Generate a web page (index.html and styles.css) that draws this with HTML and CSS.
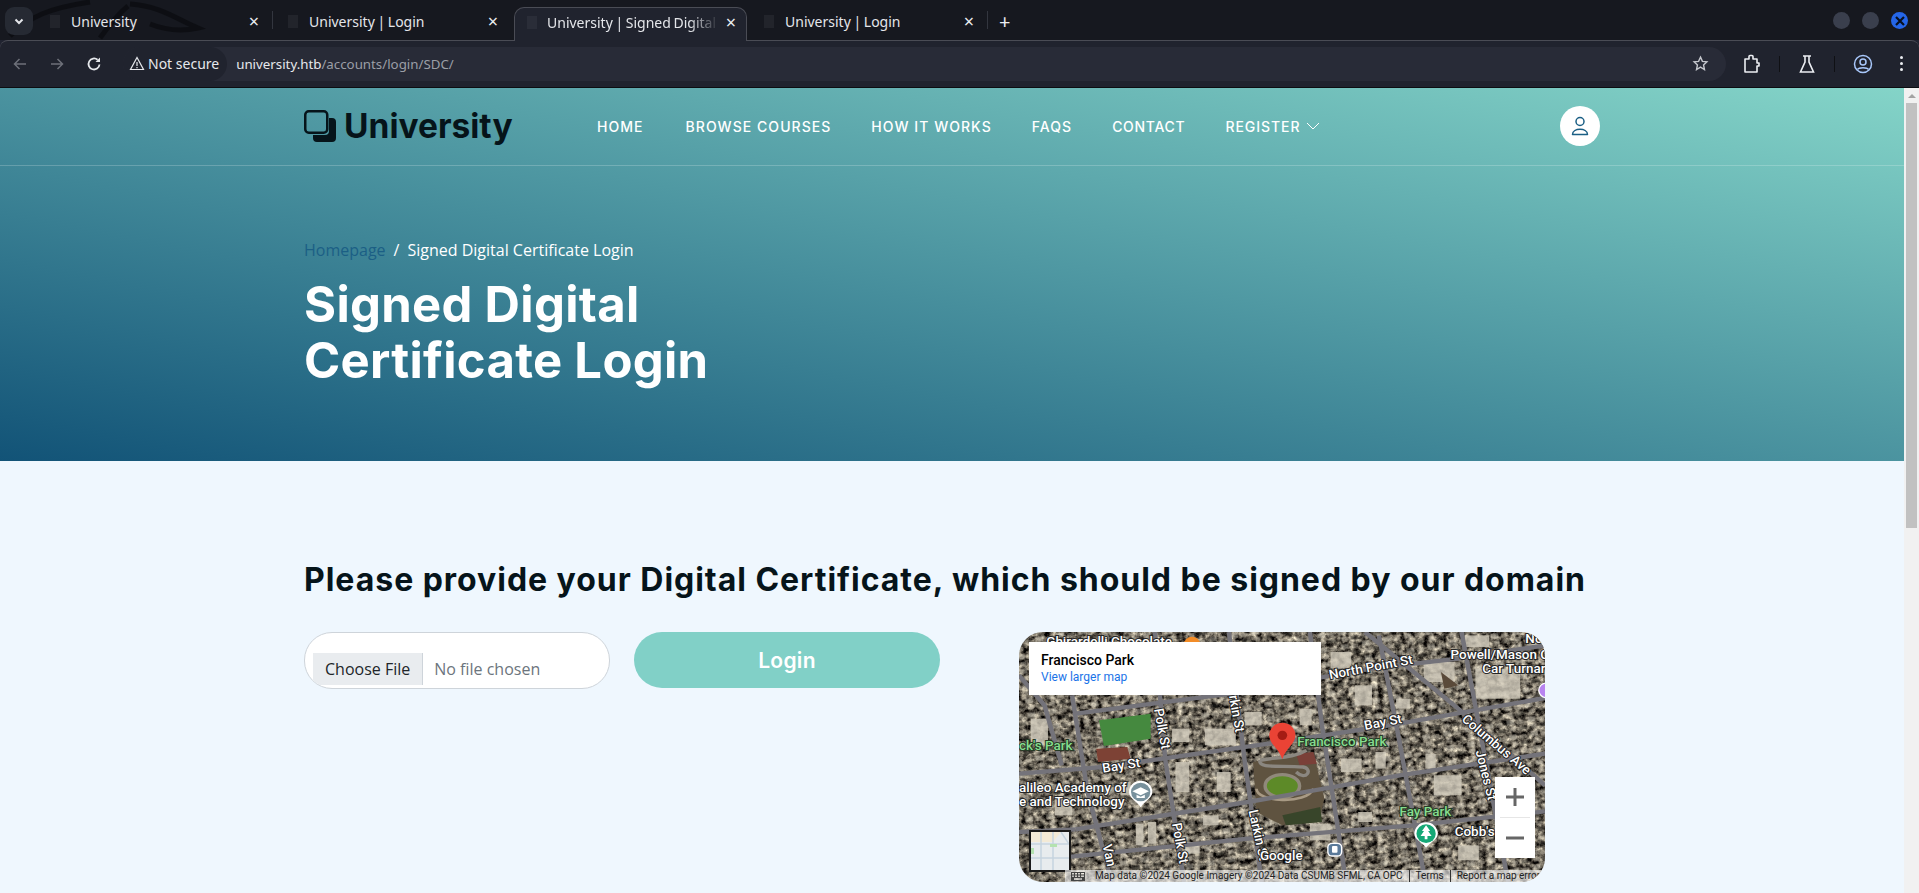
FILE: index.html
```html
<!DOCTYPE html>
<html>
<head>
  <title>University | Signed Digital Certificate Login</title>
  <link rel="stylesheet" href="styles.css">
</head>
<body>
  <!-- browser window -->
  <div class="tabstrip">
    <svg class="wallpaper" viewBox="0 0 260 40" fill="none" stroke="#0b0c10" stroke-opacity=".8" stroke-width="5">
      <path d="M10 36 C30 16 50 8 90 2"/>
      <path d="M130 4 C160 6 175 18 198 28 C180 32 165 30 150 24"/>
      <path d="M100 38 C110 24 118 14 128 6"/>
    </svg>
    <button class="tabsearch">
      <svg width="12" height="12" viewBox="0 0 12 12" fill="none" stroke="#e4e6ea" stroke-width="2"><path d="M2.500 4.500 6 8l3.500-3.500"/></svg>
    </button>
    <div class="tab tab-one">
      <span class="favicon"></span><span class="tab-title">University</span><span class="tab-close">×</span>
    </div>
    <span class="tab-sep"></span>
    <div class="tab tab-two">
      <span class="favicon"></span><span class="tab-title">University | Login</span><span class="tab-close">×</span>
    </div>
    <div class="tab tab-active">
      <span class="favicon"></span><span class="tab-title tab-title-fade">University | Signed Digital</span><span class="tab-close">×</span>
    </div>
    <div class="tab tab-four">
      <span class="favicon"></span><span class="tab-title">University | Login</span><span class="tab-close">×</span>
    </div>
    <span class="tab-sep"></span>
    <span class="newtab">+</span>
    <div class="winbtns">
      <span class="winbtn"></span>
      <span class="winbtn"></span>
      <span class="winbtn winbtn-close">
        <svg width="10" height="10" viewBox="0 0 10 10" stroke="#07101f" stroke-width="2.200"><path d="M1 1l8 8M9 1l-8 8"/></svg>
      </span>
    </div>
  </div>

  <div class="toolbar">
    <svg class="tool tool-back" width="16" height="16" viewBox="0 0 16 16" fill="none" stroke="#6d7079" stroke-width="1.500"><path d="M14 8H2.500M7.500 3l-5 5 5 5"/></svg>
    <svg class="tool tool-forward" width="16" height="16" viewBox="0 0 16 16" fill="none" stroke="#6d7079" stroke-width="1.500"><path d="M2 8h11.500M8.500 3l5 5-5 5"/></svg>
    <svg class="tool tool-reload" width="16" height="16" viewBox="0 0 16 16" fill="none" stroke="#e6e8ec" stroke-width="1.800"><path d="M13.500 8.500A5.500 5.500 0 1 1 11.600 3.800"/><path d="M14 1.500v4.500H9.500z" fill="#e6e8ec" stroke="none"/></svg>
    <div class="omnibox">
      <span class="secure">
        <svg width="16" height="15" viewBox="0 0 16 15" fill="none" stroke="#e6e8ec" stroke-width="1.200"><path d="M8 1.500 1.500 13.500h13z"/><path d="M8 6v4M8 11v1.200"/></svg>
        Not secure
      </span>
      <span class="url">university.htb<span class="url-path">/accounts/login/SDC/</span></span>
      <svg class="star" width="17" height="17" viewBox="0 0 24 24" fill="none" stroke="#c4c6cc" stroke-width="2"><path d="M12 3l2.700 6 6.300.700-4.700 4.300 1.300 6.500L12 17.200 6.400 20.500l1.300-6.500L3 9.700 9.300 9z"/></svg>
    </div>
    <div class="toolicons">
      <svg width="18" height="20" viewBox="0 0 18 20" fill="none" stroke="#eceef2" stroke-width="1.600"><path d="M2 5h4V2.500a1 1 0 0 1 1-1h2a1 1 0 0 1 1 1V5h4v4h2v3h-2v6H2z" stroke-linejoin="round"/></svg>
      <span class="tool-sep"></span>
      <svg width="18" height="20" viewBox="0 0 18 20" fill="none" stroke="#eceef2" stroke-width="1.600"><path d="M5 2h8M7 2v6L2.500 18h13L11 8V2"/></svg>
      <span class="tool-sep"></span>
      <svg width="20" height="20" viewBox="0 0 20 20" fill="none" stroke="#a8c7fa" stroke-width="1.500"><circle cx="10" cy="10" r="8.500"/><circle cx="10" cy="8" r="3"/><path d="M4.500 15.500c1.500-2.500 9.500-2.500 11 0"/></svg>
      <span class="dots"><i></i><i></i><i></i></span>
    </div>
  </div>

  <!-- page -->
  <div class="viewport">
    <div class="page">
      <div class="hero">
        <header class="site-header">
          <div class="container header-row">
            <a class="logo">
              <svg width="33" height="33" viewBox="0 0 33 33"><path d="M25 8h3a4 4 0 0 1 4 4v16a4 4 0 0 1-4 4H13a4 4 0 0 1-4-4v-3h12a4 4 0 0 0 4-4z" fill="#06141a"/><rect x="1.250" y="1.250" width="22" height="21.500" rx="3.500" fill="none" stroke="#06141a" stroke-width="2.500"/></svg>
              <span>University</span>
            </a>
            <nav class="nav">
              <a class="nav-home">Home</a>
              <a>Browse Courses</a>
              <a>How It Works</a>
              <a>FAQs</a>
              <a class="nav-contact">Contact</a>
              <a class="nav-drop">Register
                <svg width="14" height="8" viewBox="0 0 14 8" fill="none" stroke="#fff" stroke-width="1"><path d="M1 1l6 6 6-6"/></svg>
              </a>
            </nav>
            <a class="user-btn">
              <svg width="20" height="20" viewBox="0 0 20 20" fill="none" stroke="#1b5f85" stroke-width="1.500"><circle cx="10" cy="5.500" r="4"/><path d="M2.500 18.500c0-7 15-7 15 0z" stroke-linejoin="round"/></svg>
            </a>
          </div>
        </header>
        <div class="container hero-body">
          <div class="breadcrumb"><a>Homepage</a><span class="crumb-sep">/</span><span>Signed Digital Certificate Login</span></div>
          <h1>Signed Digital<br>Certificate Login</h1>
        </div>
      </div>

      <section class="container login">
        <h2>Please provide your Digital Certificate, which should be signed by our domain</h2>
        <div class="login-row">
          <form class="login-form">
            <input class="file-input" type="file">
            <button class="login-btn" type="button">Login</button>
          </form>
          <div class="map">
            <svg class="map-img" viewBox="26 20 1526 750" preserveAspectRatio="none">
              <defs>
                <filter id="sat" x="0" y="0" width="100%" height="100%" color-interpolation-filters="sRGB">
                  <feTurbulence type="fractalNoise" baseFrequency=".06" numOctaves="4" seed="11"/>
                  <feColorMatrix values="1.500 0 0 0 -.34  1.450 0 0 0 -.34  1.300 0 0 0 -.31  0 0 0 0 1"/>
                  <feGaussianBlur stdDeviation="1.200"/>
                </filter>
                <filter id="soft" x="-5%" y="-5%" width="110%" height="110%">
                  <feGaussianBlur stdDeviation="1.500"/>
                </filter>
                <pattern id="blocks" width="62" height="44" patternUnits="userSpaceOnUse" patternTransform="rotate(-10)">
                  <rect x="4" y="4" width="22" height="15" fill="#d6d0c2"/>
                  <rect x="34" y="8" width="20" height="12" fill="#b7b0a0"/>
                  <rect x="10" y="26" width="16" height="13" fill="#c4bdae"/>
                  <rect x="36" y="27" width="22" height="11" fill="#2c2a26"/>
                </pattern>
              </defs>
              <rect x="26" y="20" width="1526" height="750" filter="url(#sat)"/>
              <rect x="26" y="20" width="1526" height="750" fill="url(#blocks)" opacity=".45" filter="url(#soft)"/>

              <!-- rooftops -->
              <g fill="#d2ccbd" opacity=".8" filter="url(#soft)">
                <rect x="565" y="310" width="90" height="50"/><rect x="480" y="410" width="40" height="90"/>
                <rect x="365" y="595" width="22" height="65"/><rect x="400" y="590" width="24" height="65"/>
                <rect x="1230" y="450" width="80" height="60"/><rect x="1320" y="30" width="70" height="35"/>
                <rect x="1350" y="130" width="130" height="90"/><rect x="930" y="80" width="60" height="50"/>
                <rect x="1000" y="180" width="50" height="60"/><rect x="840" y="250" width="35" height="50"/>
                <rect x="1200" y="110" width="90" height="60"/><rect x="1205" y="385" width="30" height="45"/>
                <rect x="870" y="595" width="60" height="50"/><rect x="510" y="650" width="40" height="35"/>
                <rect x="960" y="400" width="60" height="40"/><rect x="1060" y="380" width="30" height="50"/>
                <rect x="60" y="280" width="50" height="80"/><rect x="600" y="440" width="40" height="60"/>
                <rect x="1300" y="660" width="60" height="45"/><rect x="470" y="310" width="50" height="40"/>
                <rect x="680" y="260" width="50" height="40"/><rect x="130" y="520" width="50" height="50"/>
                <rect x="320" y="470" width="30" height="40"/><rect x="1010" y="560" width="40" height="30"/>
                <rect x="560" y="570" width="45" height="30"/><rect x="1120" y="220" width="40" height="30"/>
              </g>
              <path d="M1250 140l50 40-40 10z" fill="#5a4a3a"/>

              <!-- park -->
              <g filter="url(#soft)">
                <path d="M705 410 L880 380 L912 520 L900 570 L790 600 L715 560z" fill="#5f5340"/>
                <path d="M790 570 L900 545 L905 590 L800 600z" fill="#39452a"/>
                <path d="M250 370 L340 365 L350 400 L255 410z" fill="#7d4335"/>
                <path d="M830 385 L880 380 L890 415 L840 420z" fill="#7a3f38"/>
              </g>
              <path d="M258 285 L408 265 L408 340 L272 362z" fill="#45893f"/>
              <path d="M725 405 C770 395 820 400 860 375 M725 405 C720 430 780 420 850 425 C880 430 860 470 830 440" fill="none" stroke="#8b8780" stroke-width="10"/>
              <ellipse cx="790" cy="482" rx="50" ry="34" fill="#5d8a28" stroke="#90897b" stroke-width="10"/>
              <path d="M715 490 C715 530 860 540 880 490" fill="none" stroke="#a89a84" stroke-width="8"/>

              <!-- streets -->
              <g fill="none" stroke="#74737a" stroke-width="13">
                <path d="M26 445 L270 425 L750 355 L1100 300 L1552 218"/>
                <path d="M190 265 L640 205 L1045 130 L1300 100 L1552 60"/>
                <path d="M190 612 L690 530 L1130 450 L1552 385"/>
                <path d="M120 700 L690 640 L1170 600 L1552 558"/>
                <path d="M26 620 L190 612"/>
                <path d="M420 20 L450 400 L505 770"/>
                <path d="M635 20 L680 400 L730 770"/>
                <path d="M180 210 L225 500 L295 770"/>
                <path d="M870 20 L905 300 L975 770"/>
                <path d="M1070 30 L1130 350 L1205 770"/>
                <path d="M1310 20 L1400 520 L1445 770"/>
                <path d="M1030 20 L1300 250 L1552 480"/>
                <path d="M26 150 L100 240 L150 420"/>
              </g>

              <!-- pois -->
              <circle cx="528" cy="58" r="24" fill="#f28c28"/>
              <circle cx="1556" cy="195" r="22" fill="#b884f0" stroke="#fff" stroke-width="4"/>
              <path d="M345 500a34 34 0 0 1 68 0c0 18-22 26-34 46c-12-20-34-28-34-46z" fill="#fff"/>
              <circle cx="379" cy="500" r="28" fill="#78909c"/>
              <path d="M355 498l24-12 24 12-24 12z M367 508v10h24v-10l-12 6z" fill="#fff"/>
              <path d="M1173 625a34 34 0 0 1 68 0c0 18-22 24-34 42c-12-18-34-24-34-42z" fill="#fff"/>
              <circle cx="1207" cy="625" r="28" fill="#15a876"/>
              <path d="M1207 600l12 17h-6l10 15h-12v10h-8v-10h-12l10-15h-6z" fill="#fff"/>
              <rect x="920" y="652" width="44" height="42" rx="14" fill="#fff"/>
              <rect x="924" y="656" width="36" height="34" rx="11" fill="#5b7a99"/>
              <rect x="934" y="662" width="16" height="20" rx="3" fill="#fff"/>

              <!-- labels -->
              <g class="road-label">
                <text x="105" y="62">Ghirardelli Chocolate</text>
                <text x="928" y="162" transform="rotate(-11 928 162)">North Point St</text>
                <text x="1278" y="100">Powell/Mason C</text>
                <text x="1370" y="142">Car Turnar</text>
                <text x="1495" y="52">No</text>
                <text x="270" y="442" transform="rotate(-9 270 442)">Bay St</text>
                <text x="1030" y="314" transform="rotate(-11 1030 314)">Bay St</text>
                <text x="418" y="252" transform="rotate(80 418 252)">Polk St</text>
                <text x="470" y="595" transform="rotate(80 470 595)">Polk St</text>
                <text x="635" y="212" transform="rotate(80 635 212)">rkin St</text>
                <text x="692" y="556" transform="rotate(78 692 556)">Larkin St</text>
                <text x="1308" y="285" transform="rotate(41 1308 285)">Columbus Ave</text>
                <text x="1350" y="378" transform="rotate(76 1350 378)">Jones St</text>
                <text x="268" y="660" transform="rotate(78 268 660)">Van</text>
                <text x="26" y="500">alileo Academy of</text>
                <text x="26" y="542">e and Technology</text>
                <text x="1290" y="632">Cobb's</text>
                <text x="725" y="705">Google</text>
              </g>
              <g class="park-label">
                <text x="833" y="362">Francisco Park</text>
                <text x="26" y="374">ck's Park</text>
                <text x="1130" y="572">Fay Park</text>
              </g>

              <!-- marker -->
              <path d="M752 330a38 38 0 0 1 76 0c0 26-28 38-38 72c-10-34-38-46-38-72z" fill="#ea4335"/>
              <circle cx="790" cy="330" r="14" fill="#a51c14"/>
            </svg>

            <div class="map-card">
              <div class="map-card-title">Francisco Park</div>
              <a class="map-card-link">View larger map</a>
            </div>

            <div class="map-zoom">
              <span class="zoom-btn"><svg width="18" height="18" viewBox="0 0 18 18" fill="#666"><path d="M7.500 0h3v7.500H18v3h-7.500V18h-3v-7.500H0v-3h7.500z"/></svg></span>
              <span class="zoom-line"></span>
              <span class="zoom-btn"><svg width="18" height="18" viewBox="0 0 18 18" fill="#666"><path d="M0 7.500h18v3H0z"/></svg></span>
            </div>

            <div class="map-thumb">
              <svg viewBox="0 0 38 38" preserveAspectRatio="none">
                <rect width="38" height="38" fill="#e8ecee"/>
                <path d="M0 0h30L22 10H0z" fill="#f3ead6"/>
                <path d="M0 12h38M10 0v38M22 0v38M0 26h38M30 0l8 12" stroke="#c6d4df" stroke-width="1.500" fill="none"/>
                <rect x="19" y="12" width="7" height="3" fill="#b4e2b0"/>
                <rect x="0" y="16" width="3" height="6" fill="#b4e2b0"/>
              </svg>
            </div>

            <div class="map-attrib">
              <svg class="kbd" width="14" height="9" viewBox="0 0 14 9" fill="#444"><path d="M0 0h14v9H0zM1 1v1.500h2V1zm3 0v1.500h2V1zm3 0v1.500h2V1zm3 0v1.500h3V1zM1 3.500V5h2V3.500zm3 0V5h2V3.500zm3 0V5h2V3.500zm3 0V5h3V3.500zM3 6v2h8V6z" fill-rule="evenodd"/></svg>
              <span>Map data ©2024 Google Imagery ©2024 Data CSUMB SFML, CA OPC</span>
              <span>Terms</span>
              <span>Report a map error</span>
            </div>
          </div>
        </div>
      </section>
    </div>
    <div class="scrollbar">
      <span class="scroll-up"></span>
      <span class="scroll-thumb"></span>
    </div>
  </div>
</body>
</html>
```

FILE: styles.css
```css
* {
  box-sizing: border-box;
}

html, body {
  height: 100%;
}

body {
  margin: 0;
  overflow: hidden;
  font-family: "Open Sans", sans-serif;
  background-color: #202330;
}

/* browser chrome */
.tabstrip {
  position: relative;
  display: flex;
  align-items: flex-end;
  height: 40px;
  padding-left: 5px;
  background-color: #16181f;
  font-family: "Noto Sans", sans-serif;
  font-size: 14px;
  color: #e4e6ea;
}

.wallpaper {
  position: absolute;
  left: 0;
  top: 0;
  width: 260px;
  height: 40px;
}

.tabsearch {
  position: relative;
  align-self: flex-start;
  display: flex;
  align-items: center;
  justify-content: center;
  width: 28px;
  height: 28px;
  margin-top: 7px;
  margin-right: 4px;
  padding: 0;
  border: none;
  border-radius: 9px;
  background-color: #262a33;
}

.tab {
  position: relative;
  display: flex;
  align-items: center;
  height: 33px;
  padding: 0 10px 5px 15px;
}

.tab-one {
  width: 235px;
  padding-left: 13px;
}

.tab-two {
  width: 241px;
  padding: 0 13px 5px 15px;
}

.tab-active {
  width: 233px;
  padding: 0 7px 5px 12px;
  background-color: #20232e;
  border: 1px solid #4a4c55;
  border-bottom: none;
  border-radius: 10px 10px 0 0;
  margin-bottom: -1px;
  height: 34px;
  z-index: 1;
}

.tab-four {
  width: 240px;
  padding-left: 17px;
}

.favicon {
  flex: none;
  width: 10px;
  height: 13px;
  margin-right: 11px;
  background-color: #22242b;
}

.tab-active .favicon {
  background-color: #2a2d38;
  margin-right: 10px;
}

.tab-title {
  flex: 1;
  overflow: hidden;
  white-space: nowrap;
  word-spacing: -1px;
}

.tab-title-fade {
  -webkit-mask-image: linear-gradient(to left, transparent 4px, #000 34px);
  mask-image: linear-gradient(to left, transparent 4px, #000 34px);
}

.tab-close {
  flex: none;
  width: 16px;
  font-size: 18px;
  line-height: 18px;
  text-align: center;
  color: #eceef2;
}

.tab-sep {
  position: relative;
  flex: none;
  width: 1px;
  height: 18px;
  margin-bottom: 11px;
  background-color: #33363f;
}

.newtab {
  position: relative;
  margin: 0 0 6px 11px;
  font-size: 20px;
  line-height: 24px;
  color: #eceef2;
}

.winbtns {
  position: absolute;
  right: 11px;
  top: 12px;
  display: flex;
  gap: 12px;
}

.winbtn {
  display: flex;
  align-items: center;
  justify-content: center;
  width: 17px;
  height: 17px;
  border-radius: 50%;
  background-color: #3a3f4d;
}

.winbtn-close {
  background-color: #2566e8;
}

.toolbar {
  display: flex;
  align-items: center;
  height: 48px;
  padding: 0 14px 1px 12px;
  background-color: #20232e;
  border-top: 1px solid #4a4c55;
  border-bottom: 1px solid #0c0d11;
  border-radius: 8px 8px 0 0;
  font-family: "Noto Sans", sans-serif;
}

.tool {
  flex: none;
}

.tool-forward,
.tool-reload {
  margin-left: 21px;
}

.omnibox {
  display: flex;
  align-items: center;
  width: 1603px;
  height: 34px;
  margin-left: 21px;
  padding-right: 17px;
  background-color: #282b37;
  border-radius: 17px;
  font-size: 13.300px;
}

.secure {
  display: flex;
  align-items: center;
  gap: 3px;
  height: 34px;
  padding: 0 8px 0 6px;
  font-size: 14px;
  color: #e6e8ec;
  background-color: #20232e;
  border-radius: 17px;
}

.url {
  margin-left: 9px;
  color: #e6e8ec;
}

.url-path {
  color: #9b9ea6;
}

.star {
  margin-left: auto;
}

.toolicons {
  display: flex;
  align-items: center;
  margin-left: 17px;
}

.tool-sep {
  width: 1px;
  height: 16px;
  margin: 0 18px;
  background-color: #0f1014;
}

.dots {
  display: flex;
  flex-direction: column;
  gap: 3px;
  margin-left: 27px;
}

.dots i {
  width: 3px;
  height: 3px;
  border-radius: 50%;
  background-color: #eceef2;
}

/* page */
.viewport {
  display: flex;
  height: 805px;
  overflow: hidden;
}

.page {
  flex: 1;
  min-width: 0;
  background-color: #eff7fe;
}

.scrollbar {
  position: relative;
  flex: none;
  width: 15px;
  background-color: #f1f1f1;
}

.scroll-up {
  position: absolute;
  left: 4px;
  top: 6px;
  border-left: 4px solid transparent;
  border-right: 4px solid transparent;
  border-bottom: 4px solid #a3a3a3;
}

.scroll-thumb {
  position: absolute;
  left: 2px;
  top: 15px;
  width: 11px;
  height: 425px;
  background-color: #c1c1c1;
}

.container {
  width: 1296px;
  margin: 0 auto;
}

.hero {
  height: 373px;
  background: linear-gradient(to top right, #125377, #84d4c8);
  color: #fff;
}

.site-header {
  height: 78px;
  border-bottom: 1px solid rgba(255, 255, 255, .2);
}

.header-row {
  display: flex;
  align-items: center;
  height: 76px;
}

.logo {
  display: flex;
  align-items: center;
  gap: 7px;
  width: 293px;
  font-family: "Inter", sans-serif;
  font-size: 33.500px;
  font-weight: 700;
  color: #06141a;
}

.nav {
  display: flex;
  align-items: center;
  gap: 40px;
  font-family: "Inter", sans-serif;
  font-size: 14px;
  font-weight: 500;
  letter-spacing: 1.050px;
  text-transform: uppercase;
}

.nav-home {
  margin-right: 2px;
}

.nav-contact {
  letter-spacing: .7px;
}

.nav-drop {
  letter-spacing: .95px;
}

.nav-drop svg {
  margin-left: 1px;
  vertical-align: 2px;
}

.user-btn {
  display: flex;
  align-items: center;
  justify-content: center;
  width: 40px;
  height: 40px;
  margin-left: auto;
  border-radius: 50%;
  background-color: #fff;
}

.hero-body {
  padding-top: 72px;
}

.breadcrumb {
  font-size: 16px;
  line-height: 24px;
}

.breadcrumb a {
  color: #1b5f85;
}

.crumb-sep {
  margin: 0 8px;
}

h1 {
  margin: 15px 0 0;
  font-family: "Inter", sans-serif;
  font-size: 49px;
  font-weight: 700;
  line-height: 56px;
  letter-spacing: .3px;
}

.login {
  padding-top: 99px;
}

h2 {
  margin: 0;
  font-family: "Inter", sans-serif;
  font-size: 32px;
  font-weight: 700;
  line-height: 40px;
  letter-spacing: .97px;
  color: #06141a;
  white-space: nowrap;
}

.login-row {
  display: flex;
  align-items: flex-start;
  gap: 79px;
  margin-top: 32px;
}

.login-form {
  display: flex;
  gap: 24px;
  width: 636px;
}

.file-input {
  width: 306px;
  height: 57px;
  padding: 20px 8px 0;
  background-color: #fff;
  border: 1px solid #ced4da;
  border-radius: 28px;
  font-family: "Open Sans", sans-serif;
  font-size: 16px;
  color: #6c757d;
}

.file-input::file-selector-button {
  height: 32px;
  margin-right: 11px;
  padding: 0 12px;
  background-color: #e9ecef;
  border: none;
  border-right: 1px solid #ced4da;
  border-radius: 0;
  font-family: inherit;
  font-size: 16px;
  color: #212529;
}

.login-btn {
  width: 306px;
  height: 56px;
  background-color: #81d0c7;
  border: none;
  border-radius: 28px;
  font-family: "Inter", sans-serif;
  font-size: 21px;
  font-weight: 600;
  letter-spacing: .3px;
  color: #fff;
}

/* embedded map */
.map {
  position: relative;
  width: 526px;
  height: 250px;
  overflow: hidden;
  border-radius: 24px;
  font-family: "Roboto", sans-serif;
}

.map-img {
  display: block;
  width: 100%;
  height: 100%;
}

.road-label text {
  font-family: "Roboto", sans-serif;
  font-size: 39px;
  font-weight: 500;
  fill: #fff;
  stroke: #262626;
  stroke-width: 6px;
  paint-order: stroke;
}

.park-label text {
  font-family: "Roboto", sans-serif;
  font-size: 39px;
  font-weight: 500;
  fill: #86dc8e;
  stroke: #263a26;
  stroke-width: 6px;
  paint-order: stroke;
}

.map-card {
  position: absolute;
  left: 10px;
  top: 10px;
  width: 292px;
  height: 53px;
  padding: 9px 12px;
  background-color: #fff;
}

.map-card-title {
  font-size: 14px;
  font-weight: 500;
  line-height: 18px;
  color: #000;
}

.map-card-link {
  display: block;
  font-size: 12px;
  line-height: 16px;
  color: #1a73e8;
}

.map-zoom {
  position: absolute;
  right: 10px;
  top: 145px;
  display: flex;
  flex-direction: column;
  align-items: center;
  width: 40px;
  height: 81px;
  background-color: #fff;
}

.zoom-btn {
  display: flex;
  align-items: center;
  justify-content: center;
  width: 40px;
  height: 40px;
}

.zoom-line {
  width: 30px;
  height: 1px;
  background-color: #e6e6e6;
}

.map-thumb {
  position: absolute;
  left: 10px;
  top: 198px;
  width: 42px;
  height: 42px;
  border: 2px solid #1b1b1b;
  background-color: #fff;
}

.map-thumb svg {
  display: block;
  width: 100%;
  height: 100%;
}

.map-attrib {
  position: absolute;
  left: 46px;
  right: 0;
  top: 238px;
  display: flex;
  align-items: center;
  height: 12px;
  padding-left: 6px;
  background-color: rgba(255, 255, 255, .62);
  font-size: 10px;
  line-height: 12px;
  color: #222;
  white-space: nowrap;
}

.kbd {
  margin-right: 10px;
}

.map-attrib span + span {
  margin-left: 6px;
  padding-left: 6px;
  border-left: 1px solid #333;
}
```
